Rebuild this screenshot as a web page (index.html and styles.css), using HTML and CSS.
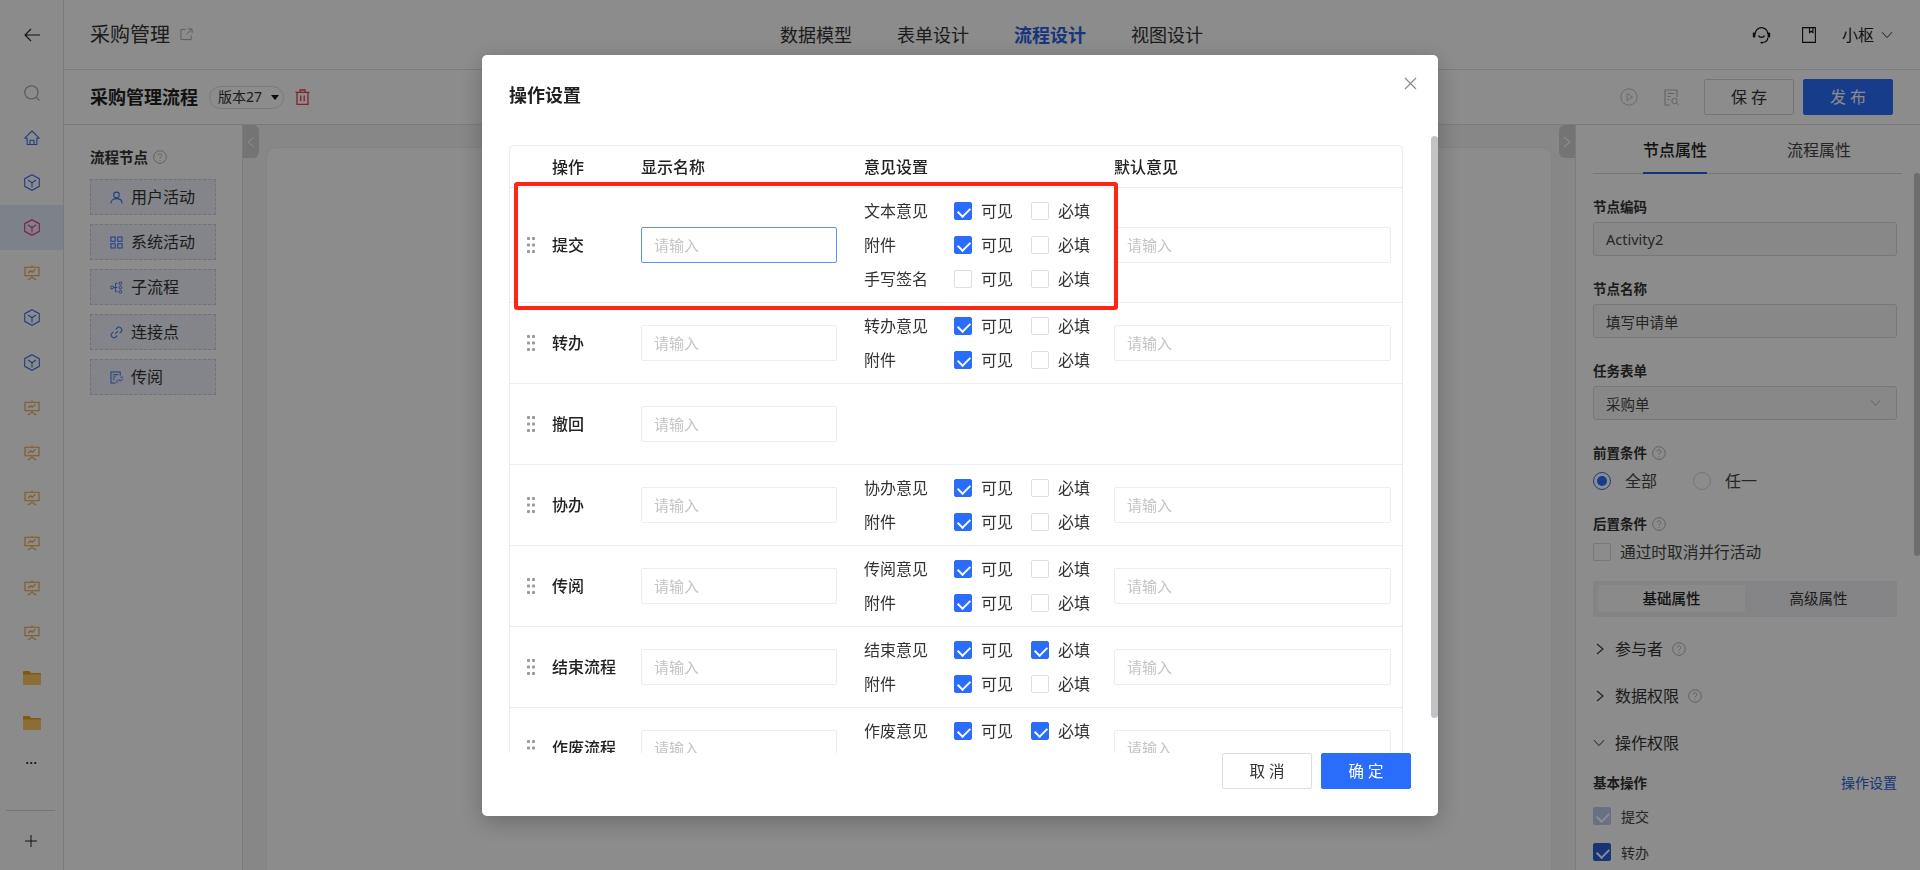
FILE: index.html
```html
<!DOCTYPE html>
<html lang="zh-CN">
<head>
<meta charset="utf-8">
<title>采购管理流程</title>
<link rel="stylesheet" href="styles.css">
</head>
<body>
<svg class="defs" xmlns="http://www.w3.org/2000/svg">
  <symbol id="i-cube" viewBox="0 0 16 17"><path d="M8 .7 15.300 4.700v7.600L8 16.300.7 12.300V4.700z M8 8.700v4.800 M8 8.700 4 6 M8 8.700 12 6" fill="none" stroke="currentColor" stroke-width="1.100"/></symbol>
  <symbol id="i-home" viewBox="0 0 16 16"><path d="M8 1 .8 8.200h2.400v6.300h9.600V8.200h2.400z M6 14.500v-4.300h4v4.300" fill="none" stroke="currentColor" stroke-width="1.100" stroke-linejoin="round"/></symbol>
  <symbol id="i-show" viewBox="0 0 16 16"><path d="M8 .6v1.600 M.4 2.200h15.200 M1 2.200v8.600h14V2.200 M8 10.800v1.600 M3.800 15 8 12.400l4.200 2.600 M4.200 8 6.600 5.800l1.600 1.400 3.200-2.800" fill="none" stroke="currentColor" stroke-width="1.100"/></symbol>
  <symbol id="i-folder" viewBox="0 0 18 14"><path d="M0 1a1 1 0 0 1 1-1h5.400L8 2h9a1 1 0 0 1 1 1v2H0z" fill="#e5a51e"/><path d="M0 3.500h18V13a1 1 0 0 1-1 1H1a1 1 0 0 1-1-1z" fill="#fbc862"/></symbol>
  <symbol id="i-help" viewBox="0 0 14 14"><circle cx="7" cy="7" r="6.300" fill="none" stroke="currentColor" stroke-width=".9"/><path d="M5.200 5.500a1.800 1.800 0 1 1 2.800 1.500c-.7.4-1 .8-1 1.500 M7 10v.9" fill="none" stroke="currentColor" stroke-width=".9"/></symbol>
  <symbol id="i-user" viewBox="0 0 14 14"><circle cx="7" cy="4.200" r="3" fill="none" stroke="currentColor" stroke-width="1.100"/><path d="M1 13.400c0-3.400 2.600-5.200 6-5.200s6 1.800 6 5.200" fill="none" stroke="currentColor" stroke-width="1.100"/></symbol>
  <symbol id="i-grid" viewBox="0 0 14 14"><path d="M1 1h4.600v4.600H1z M8.400 1H13v4.600H8.400z M1 8.400h4.600V13H1z M8.400 8.400H13V13H8.400z" fill="none" stroke="currentColor" stroke-width="1.100"/></symbol>
  <symbol id="i-sub" viewBox="0 0 14 14"><circle cx="2.200" cy="7" r="1.600" fill="none" stroke="currentColor"/><path d="M3.800 7h4 M6 2.400v9.200 M6 2.400h2 M6 11.600h2" fill="none" stroke="currentColor"/><circle cx="11.200" cy="2.400" r="1.500" fill="none" stroke="currentColor"/><circle cx="11.200" cy="7" r="1.500" fill="none" stroke="currentColor"/><circle cx="11.200" cy="11.600" r="1.500" fill="none" stroke="currentColor"/></symbol>
  <symbol id="i-link" viewBox="0 0 14 14"><path d="M5.600 8.400 8.400 5.600 M6.200 3.600 7.600 2.200a2.900 2.900 0 0 1 4.200 4.200l-1.400 1.400 M7.800 10.400l-1.400 1.400a2.900 2.900 0 0 1-4.200-4.200l1.400-1.400" fill="none" stroke="currentColor" stroke-width="1.100"/></symbol>
  <symbol id="i-read" viewBox="0 0 14 14"><path d="M6 13H1V1h10v4 M3 4h6 M3 6.500h3 M3 9h2" fill="none" stroke="currentColor" stroke-width="1.100"/><path d="M8.400 12.800a1.500 1.500 0 0 1-.8-2.600l1-1 M11 7.200l1-.8a1.500 1.500 0 0 1 1.600 2.500l-1.700 1.700a1.500 1.500 0 0 1-2-.4 M8.800 11l2.200-2.200" fill="none" stroke="currentColor" stroke-width=".9"/></symbol>
  <symbol id="i-doc" viewBox="0 0 15 17"><path d="M6 16H1V1h12v7 M3.500 4.500h7 M3.500 7.500h3 M3.500 10.500h2" fill="none" stroke="currentColor" stroke-width="1.100"/><circle cx="10.500" cy="12" r="2.700" fill="none" stroke="currentColor"/><path d="m12.500 14 2 2.200" fill="none" stroke="currentColor"/></symbol>
  <symbol id="i-ext" viewBox="0 0 14 14"><path d="M6 1.500H1v11h11V8 M7 7l5.500-5.500 M8.500 1H13v4.500" fill="none" stroke="currentColor" stroke-width="1"/></symbol>
  <symbol id="i-trash" viewBox="0 0 15 16"><path d="M.5 3.400h14 M5 3.200V1h5v2.200 M2 3.400V15.400h11V3.400 M5.800 6.400v5.800 M9.200 6.400v5.800" fill="none" stroke="currentColor" stroke-width="1.300"/></symbol>
  <symbol id="i-down" viewBox="0 0 12 8"><path d="M1 1.200 6 6.600l5-5.400" fill="none" stroke="currentColor" stroke-width="1"/></symbol>
  <symbol id="i-right" viewBox="0 0 8 12"><path d="M1 1l6 5-6 5" fill="none" stroke="currentColor" stroke-width="1.100"/></symbol>
  <symbol id="i-left" viewBox="0 0 8 12"><path d="M7 1 1 6l6 5" fill="none" stroke="currentColor" stroke-width="1"/></symbol>
  <symbol id="i-grip" viewBox="0 0 8 16"><g fill="currentColor"><rect width="3" height="3" rx=".8"/><rect x="5" width="3" height="3" rx=".8"/><rect y="6.500" width="3" height="3" rx=".8"/><rect x="5" y="6.500" width="3" height="3" rx=".8"/><rect y="13" width="3" height="3" rx=".8"/><rect x="5" y="13" width="3" height="3" rx=".8"/></g></symbol>
</svg>

<div class="app">
  <nav class="rail">
    <div class="rail-top">
      <svg class="ic-back" viewBox="0 0 16 14"><path d="M7 1 1 7l6 6 M1 7h15" fill="none" stroke="currentColor" stroke-width="1.100"/></svg>
    </div>
    <div class="rail-list">
      <div class="rail-item"><svg class="ic16 c-grey" viewBox="0 0 16 16"><circle cx="7.400" cy="7.400" r="6.600" fill="none" stroke="currentColor" stroke-width="1.100"/><path d="m12.400 12.400 3 3" stroke="currentColor" stroke-width="1.100"/></svg></div>
      <div class="rail-item"><svg class="ic16 c-blue"><use href="#i-home"/></svg></div>
      <div class="rail-item"><svg class="ic-cube c-blue"><use href="#i-cube"/></svg></div>
      <div class="rail-item is-active"><svg class="ic-cube c-pink"><use href="#i-cube"/></svg></div>
      <div class="rail-item"><svg class="ic16 c-orange"><use href="#i-show"/></svg></div>
      <div class="rail-item"><svg class="ic-cube c-blue"><use href="#i-cube"/></svg></div>
      <div class="rail-item"><svg class="ic-cube c-blue"><use href="#i-cube"/></svg></div>
      <div class="rail-item"><svg class="ic16 c-orange"><use href="#i-show"/></svg></div>
      <div class="rail-item"><svg class="ic16 c-orange"><use href="#i-show"/></svg></div>
      <div class="rail-item"><svg class="ic16 c-orange"><use href="#i-show"/></svg></div>
      <div class="rail-item"><svg class="ic16 c-orange"><use href="#i-show"/></svg></div>
      <div class="rail-item"><svg class="ic16 c-orange"><use href="#i-show"/></svg></div>
      <div class="rail-item"><svg class="ic16 c-orange"><use href="#i-show"/></svg></div>
      <div class="rail-item"><svg class="ic-folder"><use href="#i-folder"/></svg></div>
      <div class="rail-item"><svg class="ic-folder"><use href="#i-folder"/></svg></div>
      <div class="rail-more">···</div>
    </div>
    <div class="rail-foot">
      <svg class="ic-plus" viewBox="0 0 12 12"><path d="M6 0v12M0 6h12" stroke="currentColor" stroke-width="1"/></svg>
    </div>
  </nav>

  <div class="main">
    <header class="topbar">
      <div class="app-title"><span>采购管理</span><svg class="ic-ext"><use href="#i-ext"/></svg></div>
      <div class="top-tabs">
        <span>数据模型</span><span>表单设计</span><span class="is-current">流程设计</span><span>视图设计</span>
      </div>
      <div class="top-right">
        <svg class="ic-head" viewBox="0 0 19 18"><path d="M3.200 8a6.300 6.300 0 0 1 12.600 0 M6.500 9.500c.6 2.400 5.400 2.400 6 0 M15.800 11.500c0 2.800-1.800 4.700-5 5" fill="none" stroke="currentColor" stroke-width="1.200"/><rect x="0.800" y="6.500" width="2.600" height="5" rx="1" fill="currentColor"/><rect x="15.600" y="6.500" width="2.600" height="5" rx="1" fill="currentColor"/><rect x="8.500" y="15.700" width="2.500" height="1.800" rx=".6" fill="currentColor"/></svg>
        <svg class="ic-book" viewBox="0 0 14 16"><path d="M.6.6h12.800v14.800H.6z M7.500.6v5l1.700-1.300 1.700 1.300v-5" fill="none" stroke="currentColor" stroke-width="1.100"/></svg>
        <span class="user">小枢</span>
        <svg class="ic-chev"><use href="#i-down"/></svg>
      </div>
    </header>

    <div class="toolbar">
      <strong class="flow-title">采购管理流程</strong>
      <span class="version">版本27<i class="caret"></i></span>
      <svg class="ic-trash"><use href="#i-trash"/></svg>
      <div class="tool-right">
        <svg class="ic-play" viewBox="0 0 18 18"><circle cx="9" cy="9" r="8.200" fill="none" stroke="currentColor"/><path d="M7 5.500v7l5.500-3.500z" fill="none" stroke="currentColor"/></svg>
        <svg class="ic-docs"><use href="#i-doc"/></svg>
        <button class="btn btn-save">保 存</button>
        <button class="btn btn-pub">发 布</button>
      </div>
    </div>

    <div class="work">
      <aside class="nodes">
        <div class="nodes-title">流程节点<svg class="ic-help"><use href="#i-help"/></svg></div>
        <div class="node"><svg class="ic-node"><use href="#i-user"/></svg>用户活动</div>
        <div class="node"><svg class="ic-node"><use href="#i-grid"/></svg>系统活动</div>
        <div class="node"><svg class="ic-node"><use href="#i-sub"/></svg>子流程</div>
        <div class="node"><svg class="ic-node"><use href="#i-link"/></svg>连接点</div>
        <div class="node"><svg class="ic-node"><use href="#i-read"/></svg>传阅</div>
      </aside>

      <section class="canvas">
        <div class="fold fold-l"><svg class="ic-fold"><use href="#i-left"/></svg></div>
        <div class="sheet"></div>
        <div class="fold fold-r"><svg class="ic-fold"><use href="#i-right"/></svg></div>
      </section>

      <aside class="props">
        <div class="prop-tabs">
          <span class="prop-tab is-on">节点属性</span>
          <span class="prop-tab">流程属性</span>
        </div>
        <div class="prop-body">
          <div class="field"><label class="lbl">节点编码</label><div class="box box-h">Activity2</div></div>
          <div class="field"><label class="lbl">节点名称</label><div class="box box-h">填写申请单</div></div>
          <div class="field"><label class="lbl">任务表单</label><div class="box box-h">采购单<svg class="ic-sel"><use href="#i-down"/></svg></div></div>
          <div class="field field-opt"><label class="lbl">前置条件<svg class="ic-help"><use href="#i-help"/></svg></label>
            <div class="radios"><i class="radio is-on"></i><span class="big">全部</span><i class="radio"></i><span class="big">任一</span></div>
          </div>
          <div class="field field-opt2"><label class="lbl">后置条件<svg class="ic-help"><use href="#i-help"/></svg></label>
            <div class="radios"><i class="pcb"></i><span class="big big-t">通过时取消并行活动</span></div>
          </div>
          <div class="seg"><span class="seg-item is-on">基础属性</span><span class="seg-item">高级属性</span></div>
          <div class="coll"><svg class="ic-arrow"><use href="#i-right"/></svg>参与者<svg class="ic-help"><use href="#i-help"/></svg></div>
          <div class="coll"><svg class="ic-arrow"><use href="#i-right"/></svg>数据权限<svg class="ic-help"><use href="#i-help"/></svg></div>
          <div class="coll"><svg class="ic-arrow-d"><use href="#i-down"/></svg>操作权限</div>
          <div class="basic"><span class="lbl">基本操作</span><a class="link">操作设置</a></div>
          <div class="perm"><i class="pcb is-dim"></i><span>提交</span></div>
          <div class="perm"><i class="pcb is-on"></i><span>转办</span></div>
        </div>
        <div class="props-thumb"></div>
      </aside>
    </div>
  </div>
</div>

<div class="mask">
  <div class="modal">
    <div class="modal-head"><h2>操作设置</h2>
      <svg class="ic-close" viewBox="0 0 13 13"><path d="m1 1 11 11M12 1 1 12" stroke="currentColor" stroke-width="1.200"/></svg>
    </div>
    <div class="modal-body">
      <div class="table">
        <div class="tr th">
          <div class="c1 c1-h">操作</div><div>显示名称</div><div>意见设置</div><div>默认意见</div>
        </div>

        <div class="tr">
          <div class="c1"><svg class="grip"><use href="#i-grip"/></svg><b>提交</b></div>
          <div><input class="ipt is-focus" placeholder="请输入"></div>
          <div class="opts">
            <div class="opt"><span class="opt-l">文本意见</span><i class="cb on"></i><span class="cb-t">可见</span><i class="cb"></i><span>必填</span></div>
            <div class="opt"><span class="opt-l">附件</span><i class="cb on"></i><span class="cb-t">可见</span><i class="cb"></i><span>必填</span></div>
            <div class="opt"><span class="opt-l">手写签名</span><i class="cb"></i><span class="cb-t">可见</span><i class="cb"></i><span>必填</span></div>
          </div>
          <div><input class="ipt" placeholder="请输入"></div>
        </div>

        <div class="tr">
          <div class="c1"><svg class="grip"><use href="#i-grip"/></svg><b>转办</b></div>
          <div><input class="ipt" placeholder="请输入"></div>
          <div class="opts">
            <div class="opt"><span class="opt-l">转办意见</span><i class="cb on"></i><span class="cb-t">可见</span><i class="cb"></i><span>必填</span></div>
            <div class="opt"><span class="opt-l">附件</span><i class="cb on"></i><span class="cb-t">可见</span><i class="cb"></i><span>必填</span></div>
          </div>
          <div><input class="ipt" placeholder="请输入"></div>
        </div>

        <div class="tr">
          <div class="c1"><svg class="grip"><use href="#i-grip"/></svg><b>撤回</b></div>
          <div><input class="ipt" placeholder="请输入"></div>
          <div class="opts"></div>
          <div></div>
        </div>

        <div class="tr">
          <div class="c1"><svg class="grip"><use href="#i-grip"/></svg><b>协办</b></div>
          <div><input class="ipt" placeholder="请输入"></div>
          <div class="opts">
            <div class="opt"><span class="opt-l">协办意见</span><i class="cb on"></i><span class="cb-t">可见</span><i class="cb"></i><span>必填</span></div>
            <div class="opt"><span class="opt-l">附件</span><i class="cb on"></i><span class="cb-t">可见</span><i class="cb"></i><span>必填</span></div>
          </div>
          <div><input class="ipt" placeholder="请输入"></div>
        </div>

        <div class="tr">
          <div class="c1"><svg class="grip"><use href="#i-grip"/></svg><b>传阅</b></div>
          <div><input class="ipt" placeholder="请输入"></div>
          <div class="opts">
            <div class="opt"><span class="opt-l">传阅意见</span><i class="cb on"></i><span class="cb-t">可见</span><i class="cb"></i><span>必填</span></div>
            <div class="opt"><span class="opt-l">附件</span><i class="cb on"></i><span class="cb-t">可见</span><i class="cb"></i><span>必填</span></div>
          </div>
          <div><input class="ipt" placeholder="请输入"></div>
        </div>

        <div class="tr">
          <div class="c1"><svg class="grip"><use href="#i-grip"/></svg><b>结束流程</b></div>
          <div><input class="ipt" placeholder="请输入"></div>
          <div class="opts">
            <div class="opt"><span class="opt-l">结束意见</span><i class="cb on"></i><span class="cb-t">可见</span><i class="cb on"></i><span>必填</span></div>
            <div class="opt"><span class="opt-l">附件</span><i class="cb on"></i><span class="cb-t">可见</span><i class="cb"></i><span>必填</span></div>
          </div>
          <div><input class="ipt" placeholder="请输入"></div>
        </div>

        <div class="tr">
          <div class="c1"><svg class="grip"><use href="#i-grip"/></svg><b>作废流程</b></div>
          <div><input class="ipt" placeholder="请输入"></div>
          <div class="opts">
            <div class="opt"><span class="opt-l">作废意见</span><i class="cb on"></i><span class="cb-t">可见</span><i class="cb on"></i><span>必填</span></div>
            <div class="opt"><span class="opt-l">附件</span><i class="cb on"></i><span class="cb-t">可见</span><i class="cb"></i><span>必填</span></div>
          </div>
          <div><input class="ipt" placeholder="请输入"></div>
        </div>
      </div>
    </div>
    <div class="modal-foot">
      <button class="mbtn mbtn-c">取 消</button>
      <button class="mbtn mbtn-ok">确 定</button>
    </div>
    <div class="modal-thumb"></div>
    <div class="redbox"></div>
  </div>
</div>
</body>
</html>
```

FILE: styles.css
```css
* { box-sizing: border-box; }
html, body { margin: 0; height: 100%; overflow: hidden; }
body {
  font-family: "Noto Sans", "Noto Sans CJK SC", sans-serif;
  color: #2a2a2a;
  background: #fff;
  font-size: 14px;
}
.defs { display: none; }
svg { display: block; flex: none; }
i { font-style: normal; }

.app { display: flex; height: 870px; }

/* rail */
.rail { width: 64px; flex: none; border-right: 1px solid #dcdee2; display: flex; flex-direction: column; background: #fdfdfd; }
.rail-top { height: 70px; display: flex; align-items: center; justify-content: center; flex: none; }
.ic-back { width: 16px; height: 14px; color: #1f1f1f; }
.rail-list { flex: 1; min-height: 0; }
.rail-item { height: 45px; display: flex; align-items: center; justify-content: center; }
.rail-item.is-active { background: #e3ebfa; }
.ic16 { width: 16px; height: 16px; }
.ic-cube { width: 16px; height: 17px; }
.c-grey { color: #9a9a9a; }
.c-blue { color: #3d6ff2; }
.c-pink { color: #e8327c; }
.c-orange { color: #f0a33c; }
.ic-folder { width: 18px; height: 14px; }
.rail-more { height: 35px; display: flex; align-items: center; justify-content: center; font-size: 12px; line-height: 1; color: #222; font-family: "Liberation Sans", sans-serif; font-weight: 700; }
.rail-foot { height: 60px; flex: none; margin: 0 8px 0 6px; border-top: 1px solid #d6d8dc; display: flex; align-items: center; justify-content: center; }
.ic-plus { width: 12px; height: 12px; color: #1f1f1f; }

.main { flex: 1; min-width: 0; display: flex; flex-direction: column; }

/* top */
.topbar { height: 70px; flex: none; border-bottom: 1px solid #dfe1e5; display: flex; align-items: center; position: relative; padding: 0 27px 0 26px; }
.app-title { display: flex; align-items: center; font-size: 20px; line-height: 28px; color: #333; gap: 10px; }
.ic-ext { width: 13px; height: 13px; color: #a3a3a3; }
.top-tabs { position: absolute; left: 716px; top: 0; height: 69px; display: flex; align-items: center; gap: 45px; font-size: 18px; line-height: 26px; color: #333; }
.top-tabs .is-current { color: #2b62e0; font-weight: 700; }
.top-right { margin-left: auto; display: flex; align-items: center; }
.ic-head { width: 19px; height: 18px; color: #1a1a1a; margin-right: 31px; }
.ic-book { width: 14px; height: 16px; color: #111; margin-right: 26px; }
.user { font-size: 16px; line-height: 22px; color: #222; margin-right: 7px; }
.ic-chev { width: 12px; height: 8px; color: #333; }

.toolbar { height: 55px; flex: none; border-bottom: 1px solid #dfe1e5; display: flex; align-items: center; padding: 0 27px 0 26px; }
.flow-title { font-size: 18px; line-height: 26px; font-weight: 700; color: #1f1f1f; }
.version { margin-left: 11px; width: 75px; height: 23px; border: 1px solid #dcdee2; border-radius: 12px; display: flex; align-items: center; padding-left: 8px; font-size: 14px; line-height: 20px; color: #333; }
.caret { margin-left: 9px; border: 4px solid transparent; border-top: 5px solid #111; border-bottom: 0; }
.ic-trash { width: 15px; height: 16px; color: #ef3c55; margin-left: 11px; }
.tool-right { margin-left: auto; display: flex; align-items: center; }
.ic-play { width: 18px; height: 18px; color: #c4c4c4; margin-right: 26px; }
.ic-docs { width: 15px; height: 17px; color: #b5b5b5; margin-right: 25px; }
.btn { width: 90px; height: 36px; border-radius: 2px; font: inherit; font-size: 16px; line-height: 22px; padding: 0; }
.btn-save { background: #fff; border: 1px solid #d4d6da; color: #333; margin-right: 9px; }
.btn-pub { background: #2a6dfb; border: 1px solid #2a6dfb; color: #fff; }

.work { flex: 1; min-height: 0; display: flex; }

.nodes { width: 179px; flex: none; border-right: 1px solid #dfe1e5; padding: 22px 26px 0 26px; }
.nodes-title { display: flex; align-items: center; gap: 5px; font-size: 14.500px; line-height: 20px; font-weight: 700; color: #333; margin-bottom: 12px; }
.ic-help { width: 14px; height: 14px; color: #a8a8a8; }
.node { height: 36px; margin-bottom: 9px; border: 1px dashed #ccd1dc; background: #eef2fc; display: flex; align-items: center; padding-left: 19px; gap: 8px; font-size: 16px; line-height: 22px; color: #333; }
.ic-node { width: 13px; height: 13px; color: #3d6ff2; }

.canvas { flex: 1; min-width: 0; position: relative; background: #f6f6f6; padding: 22px 23px 0; }
.sheet { height: 100%; background: #fff; border: 1px solid #eeeeee; border-bottom: 0; border-radius: 10px 10px 0 0; }
.fold { position: absolute; top: 0; width: 16px; height: 33px; background: #d3d3d3; display: flex; align-items: center; justify-content: center; color: #fff; }
.fold-l { left: 0; border-radius: 0 6px 6px 0; }
.fold-r { right: 0; border-radius: 6px 0 0 6px; }
.ic-fold { width: 8px; height: 12px; }

.props { width: 345px; flex: none; border-left: 1px solid #dfe1e5; position: relative; overflow: hidden; padding: 0 23px 0 17px; }
.prop-tabs { height: 49px; margin-right: -5px; border-bottom: 1px solid #d9d9d9; display: grid; grid-template-columns: 144px 144px; padding-left: 10px; }
.prop-tab { justify-self: center; height: 49px; line-height: 50px; font-size: 16px; color: #444; }
.prop-tab.is-on { color: #222; font-weight: 500; border-bottom: 2px solid #2a5fd8; }
.prop-body { padding-top: 23px; }
.field { margin-bottom: 23px; }
.lbl { display: flex; align-items: center; gap: 5px; font-size: 13.500px; line-height: 20px; font-weight: 700; color: #333; margin-bottom: 5px; }
.box { position: relative; border: 1px solid #d9dbe0; border-radius: 3px; background: #f7f8fa; display: flex; align-items: center; padding: 0 13px 0 12px; font-size: 14.500px; color: #444; }
.box-h { height: 34px; }
.ic-sel { width: 11px; height: 8px; color: #aaa; margin-left: auto; margin-right: 2px; }
.field-opt { margin-bottom: 22px; }
.field-opt .lbl, .field-opt2 .lbl { margin-bottom: 7px; }
.field-opt2 { margin-bottom: 18px; }
.radios { display: flex; align-items: center; height: 22px; }
.big { font-size: 16px; line-height: 22px; color: #444; margin-left: 14px; margin-right: 36px; width: 32px; }
.big-t { margin-left: 9px; width: auto; font-size: 15.700px; }
.radio { width: 18px; height: 18px; border: 1px solid #d4d6da; border-radius: 50%; background: #fff; position: relative; flex: none; }
.radio.is-on { border-color: #2a6dfb; }
.radio.is-on::after { content: ""; position: absolute; inset: 3px; border-radius: 50%; background: #2a6dfb; }
.pcb { width: 18px; height: 18px; border: 1px solid #d9dbe0; border-radius: 2px; position: relative; flex: none; background: #fff; display: block; }
.pcb.is-on { background: #2a5fd8; border-color: #2a5fd8; }
.pcb.is-dim { background: #c0cdf0; border-color: #c0cdf0; }
.pcb.is-on::after, .pcb.is-dim::after { content: ""; position: absolute; left: 5px; top: 2px; width: 6px; height: 10px; border: solid #fff; border-width: 0 2px 2px 0; transform: rotate(45deg); }
.seg { height: 36px; background: #f0f1f4; border-radius: 2px; display: flex; padding: 4px 5px 5px; margin-bottom: 8px; }
.seg-item { flex: 1; text-align: center; font-size: 14.500px; line-height: 27px; color: #333; border-radius: 2px; }
.seg-item.is-on { background: #fbfbfc; font-weight: 500; color: #222; }
.coll { height: 47px; display: flex; align-items: center; font-size: 16px; line-height: 22px; color: #333; }
.ic-arrow { width: 8px; height: 12px; margin: 0 11px 0 3px; color: #333; }
.ic-arrow-d { width: 12px; height: 8px; margin: 0 10px 0 0; color: #333; }
.coll .ic-help { margin-left: 9px; }
.basic { display: flex; justify-content: space-between; align-items: center; margin: 7px 0 5px; height: 20px; }
.basic .lbl { margin: 0; }
.link { font-size: 14px; line-height: 20px; color: #2a5fd8; }
.perm { height: 36px; display: flex; align-items: center; gap: 10px; font-size: 14px; color: #444; }
.props-thumb { position: absolute; right: 0; top: 48px; width: 6px; height: 383px; border-radius: 3px; background: #c9c9c9; }

/* modal */
.mask { position: fixed; inset: 0; background: rgba(0, 0, 0, .45); display: flex; justify-content: center; align-items: flex-start; padding-top: 55px; }
.modal { width: 956px; height: 761px; background: #fff; border-radius: 5px; position: relative; display: flex; flex-direction: column; box-shadow: 0 6px 24px rgba(0, 0, 0, .25); overflow: hidden; }
.modal-head { height: 81px; flex: none; padding: 26px 27px 0; }
.modal-head h2 { margin: 0; font-size: 18px; line-height: 28px; font-weight: 700; color: #222; }
.ic-close { position: absolute; right: 21px; top: 22px; width: 13px; height: 13px; color: #8a8a8a; }
.modal-body { height: 617px; flex: none; overflow: hidden; padding: 9px 0 0 27px; }
.table { width: 894px; border: 1px solid #ebedf0; border-radius: 4px 4px 0 0; }
.tr { display: grid; grid-template-columns: 131px 223px 250px 277px; align-items: center; min-height: 81px; padding: 6px 0; border-top: 1px solid #ebedf0; }
.th { min-height: 41px; padding: 0; border-top: 0; font-size: 16px; line-height: 22px; font-weight: 500; color: #222; }
.c1 { display: flex; align-items: center; padding-left: 17px; gap: 17px; font-size: 16px; line-height: 22px; }
.c1 b { font-weight: 500; color: #222; }
.c1-h { padding-left: 42px; }
.grip { width: 8px; height: 16px; color: #9a9a9a; }
.ipt { display: block; width: 196px; height: 36px; border: 1px solid #ebedf0; border-radius: 2px; padding: 0 12px; font: inherit; font-size: 15px; outline: 0; background: #fff; }
.tr > div:last-child .ipt { width: 277px; }
.ipt::placeholder { color: #c4c4c4; opacity: 1; }
.ipt.is-focus { border-color: #5c90f6; }
.opts { font-size: 16px; line-height: 22px; color: #333; }
.opt { height: 34px; display: flex; align-items: center; }
.opt-l { width: 90px; }
.cb { width: 18px; height: 18px; border: 1px solid #dcdee2; border-radius: 2px; margin-right: 9px; position: relative; display: block; flex: none; background: #fff; }
.cb.on { background: #2a6dfb; border-color: #2a6dfb; }
.cb.on::after { content: ""; position: absolute; left: 5px; top: 2px; width: 6px; height: 10px; border: solid #fff; border-width: 0 2px 2px 0; transform: rotate(45deg); }
.cb-t { width: 32px; margin-right: 18px; }
.modal-foot { height: 63px; flex: none; display: flex; justify-content: flex-end; gap: 9px; padding-right: 27px; }
.mbtn { width: 90px; height: 36px; border-radius: 2px; font: inherit; font-size: 15.500px; line-height: 22px; padding: 0; }
.mbtn-c { background: #fff; border: 1px solid #dcdee2; color: #333; }
.mbtn-ok { background: #2a6dfb; border: 1px solid #2a6dfb; color: #fff; }
.modal-thumb { position: absolute; right: 0; top: 81px; width: 7px; height: 582px; border-radius: 4px; background: #c2c3c7; }
.redbox { position: absolute; left: 32px; top: 127px; width: 604px; height: 128px; border: 4px solid #ff2416; border-radius: 3px; }
```
